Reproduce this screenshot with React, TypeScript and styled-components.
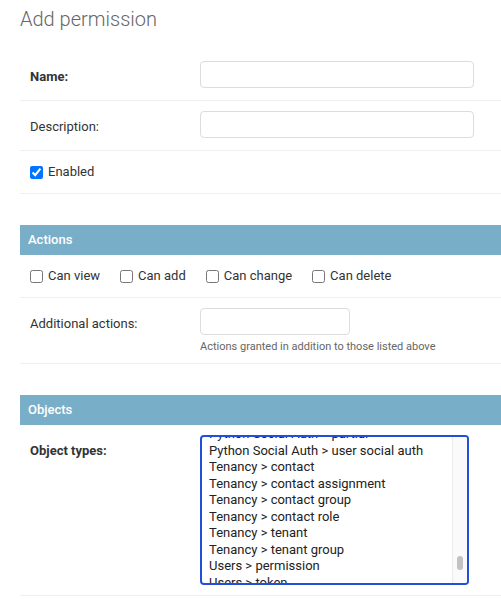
import styled, { createGlobalStyle } from 'styled-components';

const GlobalStyle = createGlobalStyle`
  body {
    margin: 0;
    background: #fff;
    color: #333;
    font-family: Roboto, "Liberation Sans", Arial, sans-serif;
    font-size: 13px;
    overflow: hidden;
  }
`;

const Page = styled.div`
  padding: 8px 0 0 20px;
`;

const Title = styled.h1`
  margin: 0 0 20px;
  font-size: 20px;
  line-height: 23px;
  font-weight: 300;
  color: #666;
`;

const Fieldset = styled.section`
  margin-bottom: 31px;
`;

const Header = styled.h2`
  margin: 0;
  padding: 8px;
  background: #79aec8;
  color: #fff;
  font-size: 13px;
  line-height: 14px;
  font-weight: 500;
`;

const Row = styled.div<{ $center?: boolean }>`
  display: flex;
  align-items: ${(p) => (p.$center ? 'center' : 'flex-start')};
  padding: 10px;
  border-bottom: 1px solid #efefef;
  min-height: 22px;
`;

const Label = styled.label<{ $required?: boolean }>`
  flex: 0 0 160px;
  padding: 8px 10px 0 0;
  line-height: 16px;
  font-weight: ${(p) => (p.$required ? 700 : 400)};
  color: #333;
`;

const Field = styled.div`
  display: flex;
  flex-direction: column;
  min-height: 29px;
`;

const TextInput = styled.input<{ $wide?: boolean }>`
  box-sizing: border-box;
  width: ${(p) => (p.$wide ? '274px' : '150px')};
  height: 27px;
  margin: 0;
  padding: 5px 6px;
  border: 1px solid #dcdcdc;
  border-radius: 4px;
  font: inherit;
  outline: none;
`;

const Help = styled.div`
  margin-top: 5px;
  font-size: 11px;
  line-height: 13px;
  color: #666;
`;

const CheckList = styled.div`
  display: flex;
  align-items: center;
  gap: 20px;
`;

const Check = styled.label`
  display: flex;
  align-items: center;
  gap: 5px;
  line-height: 16px;
  color: #333;

  input {
    width: 13px;
    height: 13px;
    margin: 0;
  }
`;

const ListBox = styled.div`
  box-sizing: border-box;
  display: flex;
  width: 269px;
  height: 150px;
  border: 2px solid #1f4fdc;
  border-radius: 4px;
  overflow: hidden;
`;

const Options = styled.ul`
  flex: 1;
  margin: -11px 0 0;
  padding: 0 0 0 7px;
  list-style: none;
  font-size: 13px;
  line-height: 16.5px;
  color: #222;
  white-space: nowrap;
`;

const Track = styled.div`
  flex: 0 0 14px;
  display: flex;
  justify-content: center;
  background: #fafafa;
  border-left: 1px solid #ececec;
`;

const Thumb = styled.div`
  width: 6px;
  height: 14px;
  margin-top: 119px;
  border-radius: 3px;
  background: #c2c2c2;
`;

const objectTypes = [
  'Python Social Auth > partial',
  'Python Social Auth > user social auth',
  'Tenancy > contact',
  'Tenancy > contact assignment',
  'Tenancy > contact group',
  'Tenancy > contact role',
  'Tenancy > tenant',
  'Tenancy > tenant group',
  'Users > permission',
  'Users > token',
];

const actions = ['Can view', 'Can add', 'Can change', 'Can delete'];

const App = () => {
  return (
    <Page>
      <GlobalStyle />
      <Title>Add permission</Title>

      <Fieldset>
        <Row>
          <Label $required>Name:</Label>
          <Field>
            <TextInput $wide />
          </Field>
        </Row>
        <Row>
          <Label>Description:</Label>
          <Field>
            <TextInput $wide />
          </Field>
        </Row>
        <Row $center>
          <Check>
            <input type="checkbox" defaultChecked />
            Enabled
          </Check>
        </Row>
      </Fieldset>

      <Fieldset>
        <Header>Actions</Header>
        <Row $center>
          <CheckList>
            {actions.map((a) => (
              <Check key={a}>
                <input type="checkbox" />
                {a}
              </Check>
            ))}
          </CheckList>
        </Row>
        <Row>
          <Label>Additional actions:</Label>
          <Field>
            <TextInput />
            <Help>Actions granted in addition to those listed above</Help>
          </Field>
        </Row>
      </Fieldset>

      <Fieldset>
        <Header>Objects</Header>
        <Row>
          <Label $required>Object types:</Label>
          <ListBox>
            <Options>
              {objectTypes.map((t) => (
                <li key={t}>{t}</li>
              ))}
            </Options>
            <Track>
              <Thumb />
            </Track>
          </ListBox>
        </Row>
      </Fieldset>
    </Page>
  );
};

export default App;
